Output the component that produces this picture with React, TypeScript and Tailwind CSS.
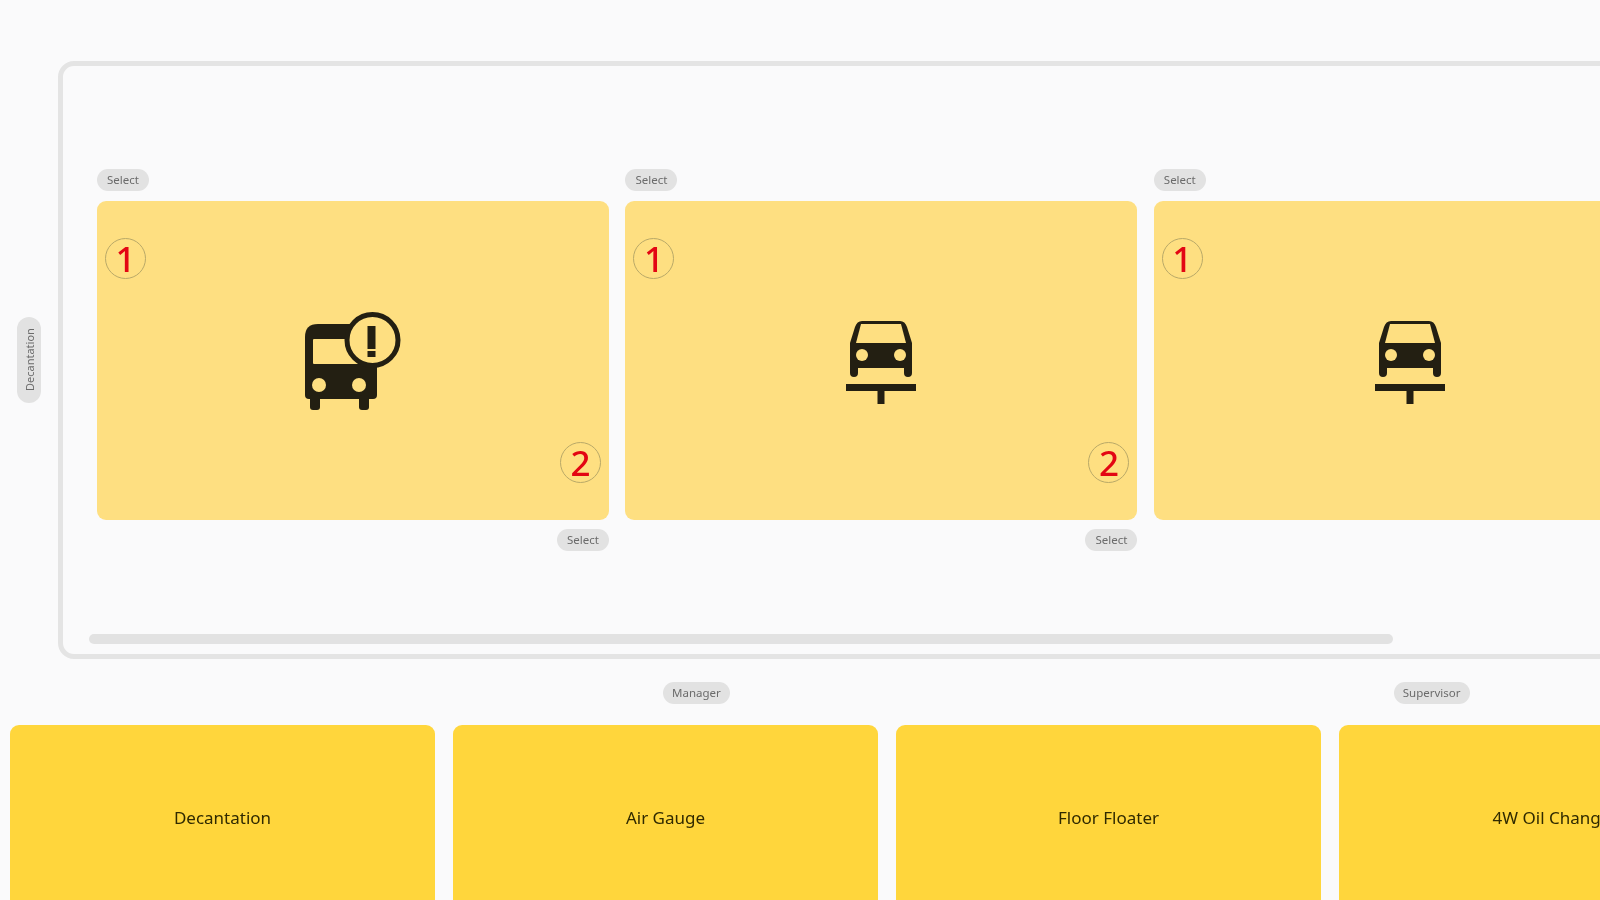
const font = { fontFamily: '"Noto Sans", "Open Sans", sans-serif' };

function Pill({ children, className = "" }: { children: string; className?: string }) {
  return (
    <div className={"flex h-[22px] items-center justify-center rounded-full bg-[#e2e2e2] px-[9px] text-[11.5px] leading-none text-[#6b6b6b] " + className}>
      {children}
    </div>
  );
}

function Badge({ n }: { n: number }) {
  return (
    <div className="flex h-[41px] w-[41px] items-center justify-center rounded-full border border-[#b9a968] text-[35px] font-medium leading-none text-[#e30613]">
      {n}
    </div>
  );
}

function BusAlert() {
  return (
    <svg width="106" height="100" viewBox="0 0 106 100" fill="none">
      <path d="M5 26 Q5 13 18 13 L66 13 Q77 13 77 23 L77 84 Q77 88 73 88 L9 88 Q5 88 5 84 Z" fill="#231f12" />
      <rect x="13" y="28" width="45" height="25" rx="1" fill="#fedf81" />
      <rect x="10" y="84" width="10" height="15" rx="3" fill="#231f12" />
      <rect x="59" y="84" width="10" height="15" rx="3" fill="#231f12" />
      <circle cx="19" cy="74" r="7" fill="#fedf81" />
      <circle cx="59" cy="74" r="7" fill="#fedf81" />
      <circle cx="72.500" cy="29" r="25.500" fill="#fedf81" stroke="#231f12" strokeWidth="5" />
      <rect x="67.500" y="15" width="8" height="23" fill="#231f12" />
      <rect x="67.500" y="40" width="8" height="6" fill="#231f12" />
    </svg>
  );
}

function CarLift() {
  return (
    <svg width="72" height="90" viewBox="0 0 72 90" fill="none">
      <path d="M10 11 Q12 5 17 5 L55 5 Q60 5 62 11 L67 27 L67 57 Q67 61 63 61 Q59 61 59 57 L59 52 L13 52 L13 57 Q13 61 9 61 Q5 61 5 57 L5 27 Z" fill="#231f12" />
      <path d="M16 8 L56 8 L61 27 L11 27 Z" fill="#fedf81" />
      <circle cx="17" cy="39" r="6" fill="#fedf81" />
      <circle cx="55" cy="39" r="6" fill="#fedf81" />
      <rect x="1" y="68" width="70" height="7" fill="#231f12" />
      <rect x="32.500" y="75" width="7" height="13" fill="#231f12" />
    </svg>
  );
}

function Card({ icon, second }: { icon: React.ReactNode; second: boolean }) {
  return (
    <div className="flex w-[512px] shrink-0 flex-col">
      <div className="flex h-[32px] items-start"><Pill className="min-w-[52px]">Select</Pill></div>
      <div className="flex h-[319px] flex-col justify-between rounded-[9px] bg-[#fedf81] px-[8px] pt-[37px] pb-[37px]">
        <Badge n={1} />
        <div className="flex justify-center">{icon}</div>
        <div className="flex h-[41px] justify-end">{second && <Badge n={2} />}</div>
      </div>
      {second && <div className="mt-[9px] flex justify-end"><Pill className="min-w-[52px]">Select</Pill></div>}
    </div>
  );
}

function Action({ label }: { label: string }) {
  return (
    <div className="flex h-[260px] w-[425px] shrink-0 items-start justify-center rounded-[9px] bg-[#ffd63c] pt-[82px] text-[17px] leading-[22px] text-[#302a00]">
      {label}
    </div>
  );
}

export default function App() {
  return (
    <div style={font} className="h-[900px] w-[1600px] overflow-hidden bg-[#fafafb] blur-[0.6px]">
      <div className="flex items-center pt-[61px] pl-[17px]">
        <div className="flex h-[86px] w-[24px] shrink-0 rotate-180 items-center justify-center rounded-full bg-[#e2e2e2] text-[11px] leading-none text-[#6b6b6b] [writing-mode:vertical-rl]">
          Decantation
        </div>
        <div className="ml-[17px] h-[598px] w-[1700px] shrink-0 rounded-[16px] border-[5px] border-[#e4e4e4] pt-[103px] pl-[34px]">
          <div className="flex h-[465px] gap-[16.4px]">
            <Card icon={<BusAlert />} second />
            <Card icon={<CarLift />} second />
            <Card icon={<CarLift />} second={false} />
          </div>
          <div className="ml-[-8px] h-[10px] w-[1304px] rounded-full bg-[#e2e2e2]" />
        </div>
      </div>
      <div className="mt-[23px] flex h-[22px]">
        <div className="ml-[663px]"><Pill>Manager</Pill></div>
        <div className="ml-[664px]"><Pill>Supervisor</Pill></div>
      </div>
      <div className="mt-[21px] ml-[10px] flex gap-[18px]">
        <Action label="Decantation" />
        <Action label="Air Gauge" />
        <Action label="Floor Floater" />
        <Action label="4W Oil Change" />
      </div>
    </div>
  );
}
